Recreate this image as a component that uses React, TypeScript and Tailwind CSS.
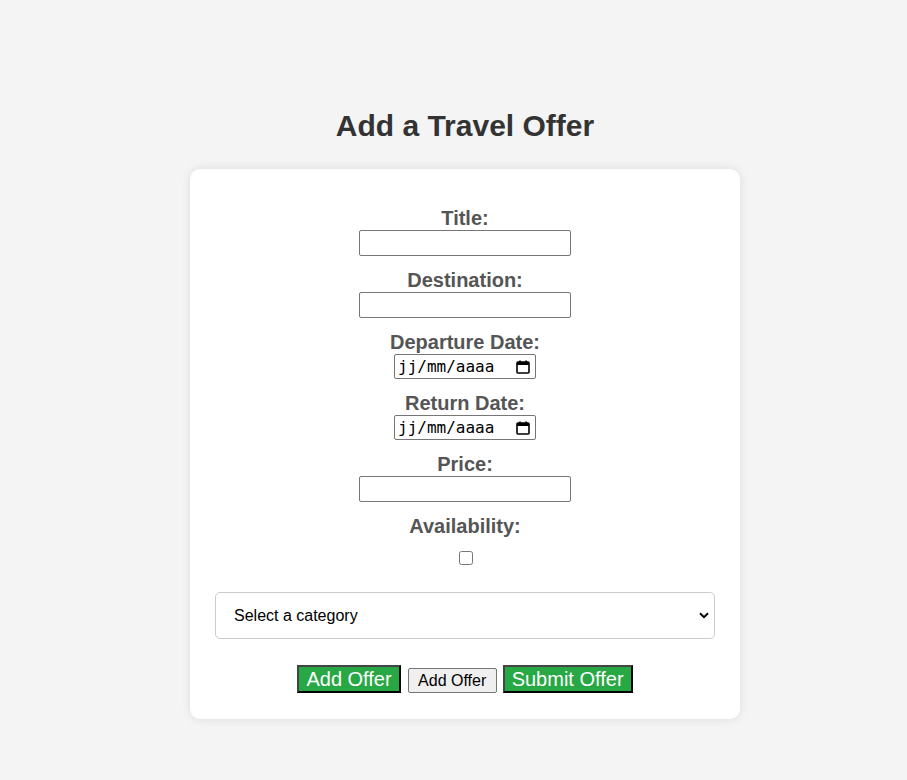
import { useState } from 'react';

function CalendarIcon() {
  return (
    <svg width="14" height="14" viewBox="0 0 14 14" fill="none">
      <rect x="1" y="2" width="12" height="11" rx="1" stroke="#000" strokeWidth="1.6" />
      <rect x="1" y="2" width="12" height="3" fill="#000" />
      <rect x="3.2" y="0.5" width="1.6" height="2" fill="#000" />
      <rect x="9.2" y="0.5" width="1.6" height="2" fill="#000" />
    </svg>
  );
}

function DateField() {
  return (
    <div className="flex items-center justify-between w-[142px] h-[25px] border border-[#767676] rounded-[2px] pl-[3px] pr-[5px] bg-white">
      <span className="text-[16px] leading-[19px] text-black font-['DejaVu_Sans_Mono',monospace]">jj/mm/aaaa</span>
      <CalendarIcon />
    </div>
  );
}

function Field({ label, children }: { label: string; children: React.ReactNode }) {
  return (
    <div className="flex flex-col items-center mb-[13px]">
      <label className="block h-[23px] leading-[23px] text-[20px] font-bold text-[#555]">{label}</label>
      {children}
    </div>
  );
}

export default function App() {
  const [title, setTitle] = useState('');
  const [destination, setDestination] = useState('');
  const [price, setPrice] = useState('');
  const [available, setAvailable] = useState(false);
  const [category, setCategory] = useState('');

  const textInput = 'w-[212px] h-[26px] border border-[#767676] rounded-[2px] bg-white px-[2px] text-[13px]';
  const greenBtn =
    'h-[28px] px-[7px] bg-[#28a745] text-white text-[20px] leading-[23px] border-2 border-t-[#444] border-l-[#444] border-r-black border-b-black';

  return (
    <div className="min-h-[780px] bg-[#f4f4f4] pt-[109px] pl-[23px] font-['Liberation_Sans',Arial,sans-serif]">
      <h1 className="h-[34px] leading-[34px] text-center text-[30px] font-bold text-[#333] mb-[26px]">
        Add a Travel Offer
      </h1>

      <form
        className="mx-auto w-[550px] bg-white rounded-[10px] shadow-[0_0_10px_rgba(0,0,0,0.1)] pt-[38px] px-[25px] pb-[26px]"
        onSubmit={(e) => e.preventDefault()}
      >
        <Field label="Title:">
          <input type="text" value={title} onChange={(e) => setTitle(e.target.value)} className={textInput} />
        </Field>
        <Field label="Destination:">
          <input type="text" value={destination} onChange={(e) => setDestination(e.target.value)} className={textInput} />
        </Field>
        <Field label="Departure Date:">
          <DateField />
        </Field>
        <Field label="Return Date:">
          <DateField />
        </Field>
        <Field label="Price:">
          <input type="text" value={price} onChange={(e) => setPrice(e.target.value)} className={textInput} />
        </Field>

        {/* availability */}
        <div className="flex flex-col items-center">
          <label className="block h-[23px] leading-[23px] text-[20px] font-bold text-[#555]">Availability:</label>
          <input
            type="checkbox"
            checked={available}
            onChange={(e) => setAvailable(e.target.checked)}
            className="w-[14px] h-[14px] mt-[13px] ml-[1px]"
          />
        </div>

        <div className="relative mt-[27px]">
          <select
            value={category}
            onChange={(e) => setCategory(e.target.value)}
            className="appearance-none w-full h-[47px] border border-[#ccc] rounded-[5px] bg-white pl-[18px] pr-[30px] text-[16px] text-black"
          >
            <option value="">Select a category</option>
            <option value="beach">Beach</option>
            <option value="mountain">Mountain</option>
            <option value="city">City</option>
          </select>
          <svg
            className="absolute right-[6px] top-[20px] pointer-events-none"
            width="10"
            height="7"
            viewBox="0 0 10 7"
            fill="none"
          >
            <path d="M1 1.2 L5 5.2 L9 1.2" stroke="#000" strokeWidth="2" />
          </svg>
        </div>

        <div className="flex items-start justify-center mt-[26px]">
          <button type="button" className={greenBtn}>
            Add Offer
          </button>
          <button
            type="button"
            className="ml-[7px] mt-[3px] w-[89px] h-[25px] bg-[#efefef] text-black text-[16px] leading-[19px] border border-[#767676] rounded-[2px]"
          >
            Add Offer
          </button>
          <button type="submit" className={`ml-[6px] ${greenBtn}`}>
            Submit Offer
          </button>
        </div>
      </form>
    </div>
  );
}
